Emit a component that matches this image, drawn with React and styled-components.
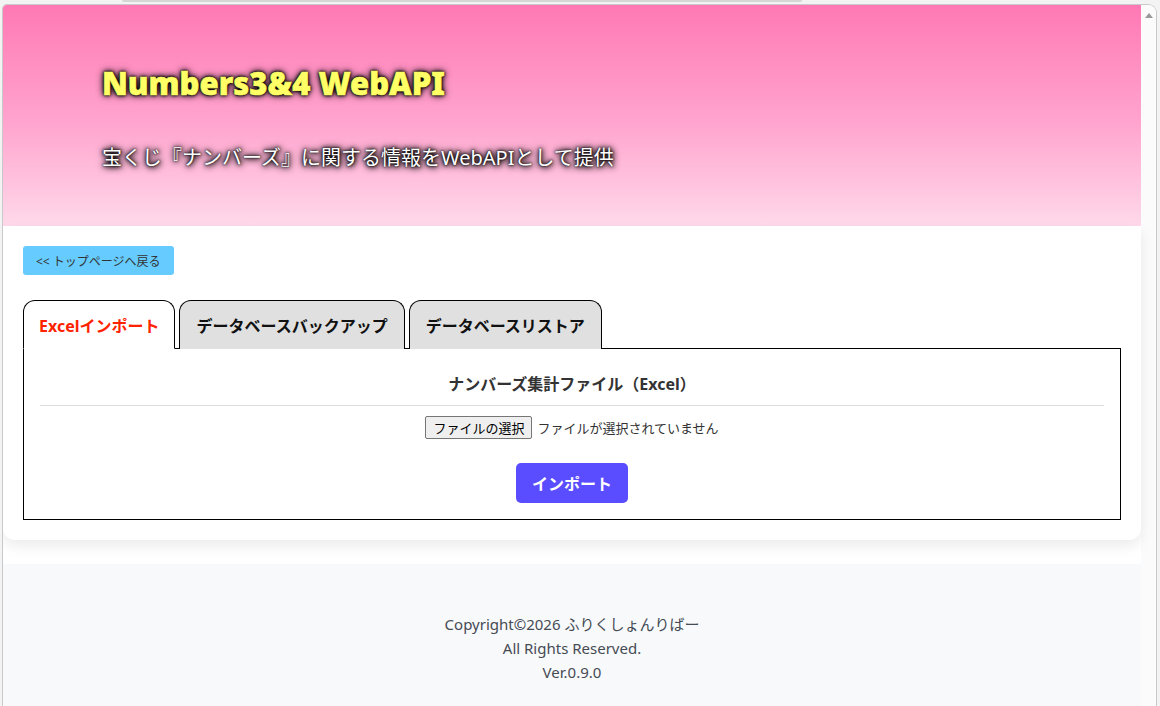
import React, { useState } from "react";
import styled, { createGlobalStyle } from "styled-components";

const GlobalStyle = createGlobalStyle`
  html, body {
    margin: 0;
    padding: 0;
    height: 100%;
    background: #f3f3f3;
    overflow: hidden;
  }
  #root {
    height: 100%;
  }
  * {
    box-sizing: border-box;
  }
`;

const Shell = styled.div`
  display: flex;
  flex-direction: column;
  height: 706px;
`;

const TopStrip = styled.div`
  height: 4px;
  padding-left: 122px;
`;

const TabLine = styled.div`
  width: 680px;
  height: 2px;
  background: #d6d6d6;
  border-radius: 0 0 2px 2px;
`;

const Frame = styled.div`
  flex: 1;
  display: flex;
  margin-left: 2px;
  margin-right: 3px;
  border: 1px solid #c9c9c9;
  border-bottom: none;
  border-radius: 5px 9px 0 0;
  overflow: hidden;
  background: #fff;
`;

const Page = styled.div`
  flex: 1;
  display: flex;
  flex-direction: column;
  background: #fff;
  font-family: "Noto Sans", "Noto Sans CJK JP", sans-serif;
  color: #333;
`;

const ScrollBar = styled.div`
  width: 15px;
  background: #fbfbfb;
  display: flex;
  justify-content: center;
  padding-top: 8px;
`;

const ArrowUp = styled.div`
  width: 0;
  height: 0;
  border-left: 4px solid transparent;
  border-right: 4px solid transparent;
  border-bottom: 5px solid #9a9a9a;
`;

const Header = styled.header`
  height: 221px;
  padding: 58px 0 0 99px;
  background: linear-gradient(to bottom, #ff79b4 0%, #ffa6cf 55%, #ffd9ea 100%);
`;

const Title = styled.h1`
  margin: 0;
  font-family: "Noto Sans", "Noto Sans CJK JP", sans-serif;
  font-size: 31px;
  font-weight: 900;
  line-height: 40px;
  color: #ffff66;
  -webkit-text-stroke: 0.6px #ffff66;
  text-shadow: 0 0 2px #000, 0 0 3px #000, 0 0 5px #000, 0 0 8px #000;
`;

const Lead = styled.p`
  margin: 40px 0 0 0;
  font-size: 20px;
  line-height: 30px;
  color: #fff;
  font-family: "Noto Sans", "Noto Sans CJK JP", sans-serif;
  text-shadow: 0 0 2px #000, 0 0 4px #000, 1px 1px 6px #000, 0 0 9px #000;
`;

const Card = styled.main`
  background: #fff;
  padding: 20px;
  border-radius: 0 0 12px 12px;
  box-shadow: 0 6px 14px rgba(0, 0, 0, 0.08);
  margin-bottom: 24px;
  position: relative;
`;

const BackButton = styled.button`
  display: block;
  height: 29px;
  padding: 0 13px;
  border: none;
  border-radius: 3px;
  background: #66ccff;
  color: #333;
  font-family: "Noto Sans", "Noto Sans CJK JP", sans-serif;
  font-size: 12px;
  cursor: pointer;
`;

const Tabs = styled.div`
  display: flex;
  gap: 4px;
  margin-top: 25px;
`;

const Tab = styled.button`
  height: 49px;
  padding: 0 ${(p) => (p.$active ? 15 : 16)}px;
  border: 1px solid #000;
  border-bottom: ${(p) => (p.$active ? "1px solid #fff" : "none")};
  border-radius: 12px 12px 0 0;
  background: ${(p) => (p.$active ? "#fff" : "#e0e0e0")};
  color: ${(p) => (p.$active ? "#ff2200" : "#111")};
  font-family: "Noto Sans", "Noto Sans CJK JP", sans-serif;
  font-size: 16px;
  font-weight: 700;
  margin-bottom: -1px;
  position: relative;
  z-index: ${(p) => (p.$active ? 1 : 0)};
  cursor: pointer;
`;

const Panel = styled.section`
  border: 1px solid #000;
  padding: 24px 16px 16px;
  display: flex;
  flex-direction: column;
  align-items: center;
`;

const PanelTitle = styled.h3`
  margin: 0;
  font-size: 16px;
  font-weight: 700;
  line-height: 22px;
  color: #333;
`;

const Rule = styled.hr`
  align-self: stretch;
  margin: 10px 0 10px;
  border: none;
  border-top: 1px solid #dcdcdc;
`;

const FileRow = styled.label`
  display: flex;
  align-items: center;
  gap: 5px;
  font-size: 13px;
  color: #333;
  cursor: pointer;
  input {
    display: none;
  }
`;

const FileButton = styled.span`
  display: inline-flex;
  align-items: center;
  height: 23px;
  padding: 0 7px;
  background: #efefef;
  border: 1px solid #767676;
  border-radius: 2px;
  color: #000;
  font-size: 13px;
`;

const ImportButton = styled.button`
  margin-top: 24px;
  width: 112px;
  height: 40px;
  border: none;
  border-radius: 5px;
  background: #5a4cff;
  color: #fff;
  font-family: "Noto Sans", "Noto Sans CJK JP", sans-serif;
  font-size: 16px;
  font-weight: 700;
  cursor: pointer;
`;

const Footer = styled.footer`
  flex: 1;
  background: #f8f9fa;
  padding-top: 48px;
  text-align: center;
  font-size: 15px;
  line-height: 24px;
  color: #454b55;
  p {
    margin: 0;
  }
`;

const tabs = ["Excelインポート", "データベースバックアップ", "データベースリストア"];

export default function App() {
  const [active, setActive] = useState(0);
  const [fileName, setFileName] = useState("");

  return (
    <>
      <GlobalStyle />
      <Shell>
        <TopStrip>
          <TabLine />
        </TopStrip>
        <Frame>
          <Page>
            <Header>
              <Title>Numbers3&amp;4 WebAPI</Title>
              <Lead>宝くじ『ナンバーズ』に関する情報をWebAPIとして提供</Lead>
            </Header>
            <Card>
              <BackButton>&lt;&lt; トップページへ戻る</BackButton>
              <Tabs>
                {tabs.map((t, i) => (
                  <Tab key={t} $active={active === i} onClick={() => setActive(i)}>
                    {t}
                  </Tab>
                ))}
              </Tabs>
              <Panel>
                <PanelTitle>ナンバーズ集計ファイル（Excel）</PanelTitle>
                <Rule />
                <FileRow>
                  <input
                    type="file"
                    onChange={(e) => setFileName(e.target.files[0]?.name || "")}
                  />
                  <FileButton>ファイルの選択</FileButton>
                  <span>{fileName || "ファイルが選択されていません"}</span>
                </FileRow>
                <ImportButton>インポート</ImportButton>
              </Panel>
            </Card>
            <Footer>
              <p>Copyright©2026 ふりくしょんりばー</p>
              <p>All Rights Reserved.</p>
              <p>Ver.0.9.0</p>
            </Footer>
          </Page>
          <ScrollBar>
            <ArrowUp />
          </ScrollBar>
        </Frame>
      </Shell>
    </>
  );
}
